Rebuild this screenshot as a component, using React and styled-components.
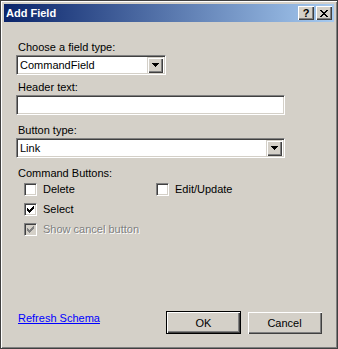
import React from 'react'
import styled, { createGlobalStyle } from 'styled-components'

const GlobalStyle = createGlobalStyle`
  html, body { margin: 0; padding: 0; background: #d4d0c8; }
  body {
    font-family: "Liberation Sans", Arial, sans-serif;
    font-size: 11px;
    color: #000;
  }
  * { box-sizing: border-box; }
`

const Frame = styled.div`
  width: 338px;
  height: 349px;
  display: flex;
  flex-direction: column;
  padding: 3px;
  background: #d4d0c8;
  border: 1px solid #404040;
  box-shadow: inset 1px 1px #ffffff, inset -1px -1px #808080;
`

const TitleBar = styled.div`
  height: 18px;
  display: flex;
  align-items: center;
  padding: 0 2px 0 2px;
  background: linear-gradient(to right, #0a246a, #a6caf0);
`

const Title = styled.div`
  flex: 1;
  color: #fff;
  font-weight: bold;
  font-size: 11px;
  line-height: 14px;
`

const CaptionButton = styled.div`
  width: 16px;
  height: 14px;
  margin-left: ${p => p.$gap || 0}px;
  display: flex;
  align-items: center;
  justify-content: center;
  background: #d4d0c8;
  box-shadow: inset 1px 1px #ffffff, inset -1px -1px #404040, inset -2px -2px #808080;
  font-weight: bold;
  font-size: 11px;
  line-height: 11px;
`

const Body = styled.div`
  flex: 1;
  display: flex;
  flex-direction: column;
  padding: 18px 12px 11px 12px;
`

const Label = styled.div`
  line-height: 14px;
  margin-top: ${p => p.$mt || 0}px;
  margin-left: 2px;
  color: ${p => (p.$disabled ? '#808080' : '#000')};
`

const Sunken = styled.div`
  width: ${p => p.$w}px;
  height: 20px;
  margin-top: 1px;
  display: flex;
  align-items: center;
  background: #fff;
  border: 1px solid;
  border-color: #808080 #ffffff #ffffff #808080;
  box-shadow: inset 1px 1px #404040, inset -1px -1px #d4d0c8;
  padding: 2px 2px 2px 3px;
`

const ComboText = styled.div`
  flex: 1;
  line-height: 14px;
`

const DropButton = styled.div`
  width: 16px;
  height: 16px;
  display: flex;
  align-items: center;
  justify-content: center;
  background: #d4d0c8;
  box-shadow: inset 1px 1px #d4d0c8, inset 2px 2px #ffffff, inset -1px -1px #404040, inset -2px -2px #808080;
`

const CheckGrid = styled.div`
  display: grid;
  grid-template-columns: 132px 1fr;
  grid-auto-rows: 20px;
  margin-left: 8px;
  margin-top: -1px;
`

const CheckRow = styled.div`
  display: flex;
  align-items: center;
  grid-column: ${p => (p.$wide ? '1 / span 2' : 'auto')};
`

const CheckBox = styled.div`
  width: 13px;
  height: 13px;
  display: flex;
  align-items: center;
  justify-content: center;
  background: ${p => (p.$disabled ? '#d4d0c8' : '#fff')};
  border: 1px solid;
  border-color: #808080 #ffffff #ffffff #808080;
  box-shadow: inset 1px 1px #404040, inset -1px -1px #d4d0c8;
`

const CheckText = styled.span`
  margin-left: 6px;
  line-height: 14px;
  color: ${p => (p.$disabled ? '#808080' : '#000')};
  text-shadow: ${p => (p.$disabled ? '1px 1px #ffffff' : 'none')};
`

const Footer = styled.div`
  margin-top: auto;
  display: flex;
  align-items: flex-start;
`

const Link = styled.a`
  flex: 1;
  margin-left: 2px;
  line-height: 14px;
  color: #0000ff;
  text-decoration: underline;
  cursor: pointer;
`

const Button = styled.button`
  width: 75px;
  height: 23px;
  margin-left: ${p => p.$gap || 0}px;
  padding: 0;
  font-family: inherit;
  font-size: 11px;
  color: #000;
  background: #d4d0c8;
  border: ${p => (p.$default ? '1px solid #000' : 'none')};
  box-shadow: ${p =>
    p.$default
      ? 'inset 1px 1px #ffffff, inset -1px -1px #404040, inset -2px -2px #808080'
      : 'inset 1px 1px #d4d0c8, inset 2px 2px #ffffff, inset -1px -1px #404040, inset -2px -2px #808080'};
`

const CHECK = [
  '......#',
  '.....##',
  '#...###',
  '##.###.',
  '#####..',
  '.###...',
  '..#....',
]

const CLOSE = [
  '##....##',
  '.##..##.',
  '..####..',
  '...##...',
  '..####..',
  '.##..##.',
  '##....##',
]

const PixelIcon = ({ rows, color }) => (
  <svg width={rows[0].length} height={rows.length} shapeRendering="crispEdges">
    {rows.flatMap((r, y) =>
      r.split('').map((c, x) =>
        c === '#' ? <rect key={`${x}-${y}`} x={x} y={y} width="1" height="1" fill={color} /> : null
      )
    )}
  </svg>
)

const Arrow = () => (
  <svg width="7" height="4" shapeRendering="crispEdges">
    <polygon points="0,0 7,0 3.5,4" fill="#000" />
  </svg>
)

const Combo = ({ w, value }) => (
  <Sunken $w={w}>
    <ComboText>{value}</ComboText>
    <DropButton><Arrow /></DropButton>
  </Sunken>
)

const Check = ({ label, checked, disabled, wide }) => (
  <CheckRow $wide={wide}>
    <CheckBox $disabled={disabled}>
      {checked && <PixelIcon rows={CHECK} color={disabled ? '#808080' : '#000'} />}
    </CheckBox>
    <CheckText $disabled={disabled}>{label}</CheckText>
  </CheckRow>
)

export default function App() {
  return (
    <>
      <GlobalStyle />
      <Frame>
        <TitleBar>
          <Title>Add Field</Title>
          <CaptionButton>?</CaptionButton>
          <CaptionButton $gap={2}><PixelIcon rows={CLOSE} color="#000" /></CaptionButton>
        </TitleBar>
        <Body>
          <Label>Choose a field type:</Label>
          <Combo w={150} value="CommandField" />
          <Label $mt={5}>Header text:</Label>
          <Sunken $w={269} />
          <Label $mt={8}>Button type:</Label>
          <Combo w={269} value="Link" />
          <Label $mt={8}>Command Buttons:</Label>
          <CheckGrid>
            <Check label="Delete" />
            <Check label="Edit/Update" />
            <Check label="Select" checked wide />
            <Check label="Show cancel button" checked disabled wide />
          </CheckGrid>
          <Footer>
            <Link>Refresh Schema</Link>
            <Button $default>OK</Button>
            <Button $gap={6}>Cancel</Button>
          </Footer>
        </Body>
      </Frame>
    </>
  )
}
